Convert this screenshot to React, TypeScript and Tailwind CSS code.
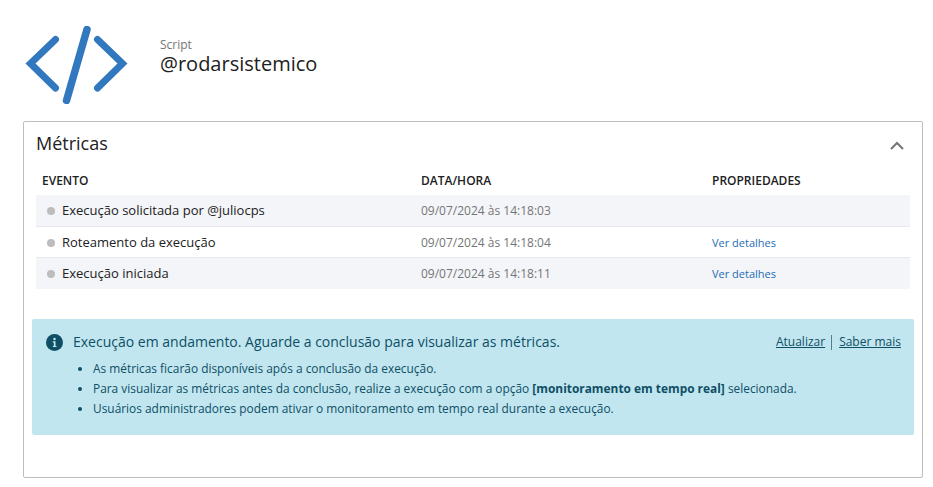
const font = { fontFamily: '"Open Sans", sans-serif' };

const rows = [
  { event: 'Execução solicitada por @juliocps', date: '09/07/2024 às 14:18:03', details: false },
  { event: 'Roteamento da execução', date: '09/07/2024 às 14:18:04', details: true },
  { event: 'Execução iniciada', date: '09/07/2024 às 14:18:11', details: true },
];

function CodeIcon() {
  return (
    <svg width="103" height="78" viewBox="0 0 103 78" fill="none" stroke="#3278be" strokeWidth="7" strokeLinecap="round" strokeLinejoin="miter">
      <path d="M30.5 13.5 L5.5 37.5 L30.5 62" />
      <path d="M72.5 13.5 L97.5 37.5 L72.5 62" />
      <path d="M62 3.5 L41.5 74.5" strokeWidth="7.5" />
    </svg>
  );
}

function InfoIcon() {
  return (
    <svg width="17" height="17" viewBox="0 0 17 17" className="shrink-0">
      <circle cx="8.5" cy="8.5" r="8.5" fill="#0f4f66" />
      <circle cx="8.5" cy="4.9" r="1.25" fill="#c1e6ef" />
      <path d="M6.8 7.2h2.7v4.7h1v1.2H6.8v-1.2h1v-3.5h-1z" fill="#c1e6ef" />
    </svg>
  );
}

export default function App() {
  return (
    <div className="h-[487px] w-[933px] overflow-hidden bg-white pl-[23px] pr-[10px] pt-[26px]" style={font}>
      <div className="flex h-[95px] items-start">
        <div className="ml-[2px]">
          <CodeIcon />
        </div>
        <div className="ml-[32px] mt-[10px]">
          <div className="text-[12px] leading-[17px] text-[#757575]">Script</div>
          <div className="text-[20px] leading-[21px] text-[#212121]">@rodarsistemico</div>
        </div>
      </div>

      <div className="h-[357px] w-[900px] rounded-[2px] border border-[#bdbdbd]">
        <div className="flex h-[44px] items-center justify-between pb-[1px] pl-[12px] pr-[18px]">
          <span className="text-[18px] text-[#212121]">Métricas</span>
          <svg width="14" height="9" viewBox="0 0 14 9" fill="none" stroke="#757575" strokeWidth="2" className="mt-[3px]">
            <path d="M1 8 L7 2 L13 8" />
          </svg>
        </div>

        <div className="mx-[12px] w-[874px]">
          <div className="grid h-[29px] grid-cols-[379px_291px_1fr] items-center pl-[6px] text-[12px] font-semibold text-[#212121]">
            <span>EVENTO</span>
            <span>DATA/HORA</span>
            <span>PROPRIEDADES</span>
          </div>
          {rows.map((row, i) => (
            <div
              key={row.event}
              className={`grid grid-cols-[385px_291px_1fr] items-center ${i === 1 ? 'h-[30px] bg-white pt-[1px]' : 'bg-[#f4f5f9]'} ${i === 0 ? 'h-[32px] border-b border-[#e6e8ec]' : ''} ${i === 2 ? 'h-[32px] border-t border-[#e6e8ec]' : ''}`}
            >
              <div className="flex items-center pl-[11px] text-[13px] text-[#212121]">
                <span className="mr-[7px] h-[8px] w-[8px] rounded-full bg-[#bdbdbd]" />
                {row.event}
              </div>
              <span className="text-[12px] text-[#757575]">{row.date}</span>
              {row.details ? <a className="pt-[1px] text-[11px] text-[#1f6cb5]">Ver detalhes</a> : <span />}
            </div>
          ))}
        </div>

        <div className="ml-[8px] mt-[30px] h-[116px] w-[882px] rounded-[2px] bg-[#c1e6ef] pl-[14px] pr-[13px] pt-[13px] text-[#0f4f66]">
          <div className="flex items-center">
            <InfoIcon />
            <span className="ml-[10px] text-[14px] leading-[20px]">
              Execução em andamento. Aguarde a conclusão para visualizar as métricas.
            </span>
            <div className="ml-auto flex items-center text-[12px]">
              <a className="underline">Atualizar</a>
              <span className="ml-[6px] mr-[7px] h-[15px] w-px bg-[#4d8194]" />
              <a className="underline">Saber mais</a>
            </div>
          </div>
          <ul className="ml-[47px] mt-[6px] list-disc text-[11.9px] leading-[20px]">
            <li>As métricas ficarão disponíveis após a conclusão da execução.</li>
            <li>
              Para visualizar as métricas antes da conclusão, realize a execução com a opção{' '}
              <b className="font-bold">[monitoramento em tempo real]</b> selecionada.
            </li>
            <li>Usuários administradores podem ativar o monitoramento em tempo real durante a execução.</li>
          </ul>
        </div>
      </div>
    </div>
  );
}
